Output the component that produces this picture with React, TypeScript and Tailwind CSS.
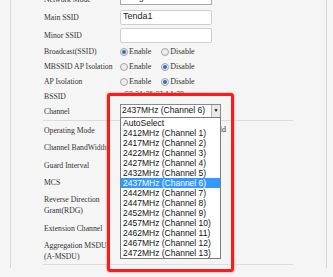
import type { ReactNode } from "react";

const channels = [
  "AutoSelect",
  ...[2412, 2417, 2422, 2427, 2432, 2437, 2442, 2447, 2452, 2457, 2462, 2467, 2472].map(
    (f, i) => `${f}MHz (Channel ${i + 1})`
  ),
];

function Radio({ on }: { on?: boolean }) {
  return (
    <span className="flex h-[8px] w-[8px] shrink-0 items-center justify-center rounded-full border border-[#a3a3a3] bg-[#ececec]">
      {on && <span className="h-[4px] w-[4px] rounded-full bg-[#2f6fc4]" />}
    </span>
  );
}

function RadioPair({ first }: { first: boolean }) {
  return (
    <div className="flex items-center text-[8px]">
      <Radio on={first} />
      <span className="ml-[1px]">Enable</span>
      <span className="ml-[10px]">
        <Radio on={!first} />
      </span>
      <span className="ml-[1px]">Disable</span>
    </div>
  );
}

function Row({ label, h, children }: { label: ReactNode; h: string; children?: ReactNode }) {
  return (
    <div className={`flex items-center ${h}`}>
      <div className="w-[77px] shrink-0 whitespace-nowrap pl-[1px] text-[7.7px] leading-[11px]">{label}</div>
      <div className="flex flex-1 items-center">{children}</div>
    </div>
  );
}

function TextBox({ value }: { value?: string }) {
  return (
    <div className="flex h-[15px] w-[92px] items-center rounded-[2px] border border-[#cfcfcf] bg-white pl-[2px] font-['Liberation_Sans',sans-serif] text-[9px] text-[#222]">
      {value}
    </div>
  );
}

export default function App() {
  return (
    <div className="relative h-[277px] w-[333px] overflow-hidden bg-[#f5f5f5] font-['Liberation_Serif',serif] text-[8px] text-[#333]">
      <div className="ml-[10px] h-full w-[317px] border-x border-[#d6d6d6]">
        <div className="-mt-[9px] ml-[32px] w-[250px]">
          <Row label="Network Mode" h="h-[17px]">
            <div className="-mt-[5px] flex h-[15px] w-[92px] items-center justify-between border border-[#a9a9a9] bg-white px-[2px] font-['Liberation_Sans',sans-serif] text-[8.5px] text-[#222]">
              <span>11b/g/n mixed mode</span>
              <span className="text-[7px]">▼</span>
            </div>
          </Row>
          <Row label="Main SSID" h="h-[18px]">
            <TextBox value="Tenda1" />
          </Row>
          <Row label="Minor SSID" h="h-[18px]">
            <TextBox />
          </Row>
          <Row label="Broadcast(SSID)" h="h-[15px]">
            <RadioPair first />
          </Row>
          <Row label="MBSSID AP Isolation" h="h-[15px]">
            <RadioPair first={false} />
          </Row>
          <Row label="AP Isolation" h="h-[15px]">
            <RadioPair first={false} />
          </Row>
          <Row label="BSSID" h="h-[14px]">
            <span className="-mt-[4px] pl-[4px] font-['Liberation_Sans',sans-serif] text-[7px] text-[#555]">C8:3A:35:07:AA:78</span>
          </Row>
          <Row label="Channel" h="h-[17px]">
            <div className="relative mb-[2px] flex h-[14px] w-[101px] items-center border border-[#8a8a8a] bg-white font-['Liberation_Sans',sans-serif] text-[8.5px] text-[#111]">
              <span className="flex-1 pl-[1px]">2437MHz (Channel 6)</span>
              <span className="flex h-full w-[9px] items-center justify-center border-l border-[#b5b5b5] bg-[#e8e8e8] text-[5px] text-black">
                ▼
              </span>
              <div className="absolute left-[-1px] top-full z-10 w-[101px] border border-[#7c7c7c] bg-white">
                {channels.map((c, i) => (
                  <div
                    key={c}
                    className={`h-[10px] pl-[2px] leading-[10px] ${
                      i === 6 ? "bg-[#3399ff] text-white" : "text-[#111]"
                    }`}
                  >
                    {c}
                  </div>
                ))}
              </div>
            </div>
          </Row>
          <div className="border-t border-[#dcdcdc]" />
          <Row label="Operating Mode" h="h-[18px]">
            <div className="flex w-[106px] items-center justify-end text-[8px]">
              <span>Green Field</span>
            </div>
          </Row>
          <Row label="Channel BandWidth" h="h-[17px]" />
          <Row label="Guard Interval" h="h-[18px]" />
          <Row label="MCS" h="h-[17px]" />
          <Row label={<>Reverse Direction<br />Grant(RDG)</>} h="h-[28px]" />
          <Row label="Extension Channel" h="h-[18px]" />
          <Row label={<>Aggregation MSDU<br />(A-MSDU)</>} h="h-[27px]" />
          <div className="border-t border-[#dcdcdc]" />
        </div>
      </div>
      <div className="pointer-events-none absolute left-[107px] top-[93px] z-20 h-[179px] w-[127px] rounded-[3px] border-[3px] border-[#ff1a1a] shadow-[0_0_2px_#ff4d4d]" />
    </div>
  );
}
